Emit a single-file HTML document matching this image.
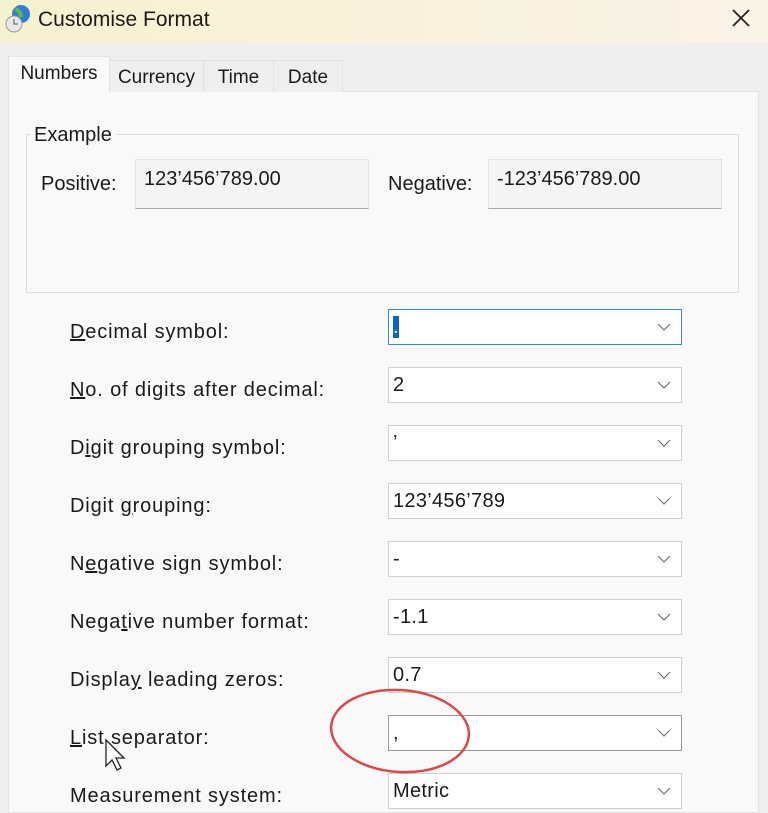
<!DOCTYPE html>
<html><head><style>
body{margin:0;width:768px;height:801px;overflow:hidden;background:#efefef;font-family:"Liberation Sans",sans-serif;color:#1a1a1a;position:relative}
.abs{position:absolute}
.title{left:0;top:0;width:768px;height:43px;background:linear-gradient(90deg,#f6f1cf 0%,#f8f2dc 50%,#faf3e8 100%)}
.tab{position:absolute;background:#efefef;border:1px solid #e2e2e2;border-bottom:none;font-size:19px;text-align:center}
.panel{left:8px;top:91px;width:749px;height:720px;background:#f9f9f9;border:1px solid #e4e4e4}
.lbl{position:absolute;left:70px;font-size:20px;letter-spacing:0.85px}
.combo{position:absolute;left:388px;width:294px;height:36px;background:#fff;border:1px solid #cfcfcf;font-size:20px;box-sizing:border-box;padding:6px 0 0 4px;letter-spacing:0.3px}
.combo svg{position:absolute;right:10px;top:13px}
u{text-decoration:underline}
</style></head><body>
<div class="abs title"></div>
<svg class="abs" style="left:4px;top:3px" width="28" height="30"><circle cx="17" cy="11" r="9" fill="#2d7fd0"/><path d="M11 6q6 2 6 8" stroke="#5cb848" stroke-width="4" fill="none"/><circle cx="10" cy="21" r="8" fill="#e8e8e8" stroke="#999"/><path d="M10 16v5h4" stroke="#555" fill="none"/></svg>
<div class="abs" style="left:38px;top:8px;font-size:21px">Customise Format</div>
<svg class="abs" style="left:731px;top:8px" width="20" height="20"><path d="M2 2L18 18M18 2L2 18" stroke="#222" stroke-width="1.8"/></svg>
<div class="abs panel"></div>
<div class="tab" style="left:8px;top:56px;width:100px;height:36px;background:#f9f9f9;line-height:34px">Numbers</div>
<div class="tab" style="left:109px;top:60px;width:93px;height:31px;line-height:34px">Currency</div>
<div class="tab" style="left:203px;top:60px;width:69px;height:31px;line-height:34px">Time</div>
<div class="tab" style="left:273px;top:60px;width:68px;height:31px;line-height:34px">Date</div>
<div class="abs" style="left:26px;top:134px;width:711px;height:157px;border:1px solid #dcdcdc"></div>
<div class="abs" style="left:30px;top:124px;background:#f9f9f9;padding:0 4px;font-size:20px">Example</div>
<div class="abs" style="left:41px;top:173px;font-size:20px">Positive:</div>
<div class="abs" style="left:135px;top:159px;width:234px;height:50px;background:#f4f4f4;border:1px solid #e2e2e2;border-bottom:1px solid #aaa;font-size:20px;box-sizing:border-box;padding:8px 8px">123’456’789.00</div>
<div class="abs" style="left:388px;top:173px;font-size:20px">Negative:</div>
<div class="abs" style="left:488px;top:159px;width:234px;height:50px;background:#f4f4f4;border:1px solid #e2e2e2;border-bottom:1px solid #aaa;font-size:20px;box-sizing:border-box;padding:8px 8px">-123’456’789.00</div>

<div class="lbl" style="top:321px"><u>D</u>ecimal symbol:</div>
<div class="combo" style="top:309px;border-color:#3b86d6"><span style="background:#0a64c8;color:#fff">.</span><svg width="14" height="8"><path d="M1 1l6 6 6-6" stroke="#666" fill="none"/></svg></div>
<div class="lbl" style="top:379px"><u>N</u>o. of digits after decimal:</div>
<div class="combo" style="top:367px">2<svg width="14" height="8"><path d="M1 1l6 6 6-6" stroke="#666" fill="none"/></svg></div>
<div class="lbl" style="top:437px">D<u>i</u>git grouping symbol:</div>
<div class="combo" style="top:425px">’<svg width="14" height="8"><path d="M1 1l6 6 6-6" stroke="#666" fill="none"/></svg></div>
<div class="lbl" style="top:495px">Digit <u>g</u>rouping:</div>
<div class="combo" style="top:483px">123’456’789<svg width="14" height="8"><path d="M1 1l6 6 6-6" stroke="#666" fill="none"/></svg></div>
<div class="lbl" style="top:553px">N<u>e</u>gative sign symbol:</div>
<div class="combo" style="top:541px">-<svg width="14" height="8"><path d="M1 1l6 6 6-6" stroke="#666" fill="none"/></svg></div>
<div class="lbl" style="top:611px">Nega<u>t</u>ive number format:</div>
<div class="combo" style="top:599px">-1.1<svg width="14" height="8"><path d="M1 1l6 6 6-6" stroke="#666" fill="none"/></svg></div>
<div class="lbl" style="top:669px">Displa<u>y</u> leading zeros:</div>
<div class="combo" style="top:657px">0.7<svg width="14" height="8"><path d="M1 1l6 6 6-6" stroke="#666" fill="none"/></svg></div>
<div class="lbl" style="top:727px"><u>L</u>ist separator:</div>
<div class="combo" style="top:715px;border-color:#999">,<svg width="14" height="8"><path d="M1 1l6 6 6-6" stroke="#666" fill="none"/></svg></div>
<div class="lbl" style="top:785px">Measurement system:</div>
<div class="combo" style="top:773px">Metric<svg width="14" height="8"><path d="M1 1l6 6 6-6" stroke="#666" fill="none"/></svg></div>

<svg class="abs" style="left:325px;top:685px" width="155" height="95"><ellipse cx="75" cy="46" rx="69" ry="41" transform="rotate(4 75 46)" stroke="#d9494a" stroke-width="2.5" fill="none"/></svg>
<svg class="abs" style="left:104px;top:738px" width="24" height="34"><path d="M2 2v26l6-6 5 10 4-2-5-10h8z" fill="#fff" stroke="#222" stroke-width="1.3"/></svg>
</body></html>
